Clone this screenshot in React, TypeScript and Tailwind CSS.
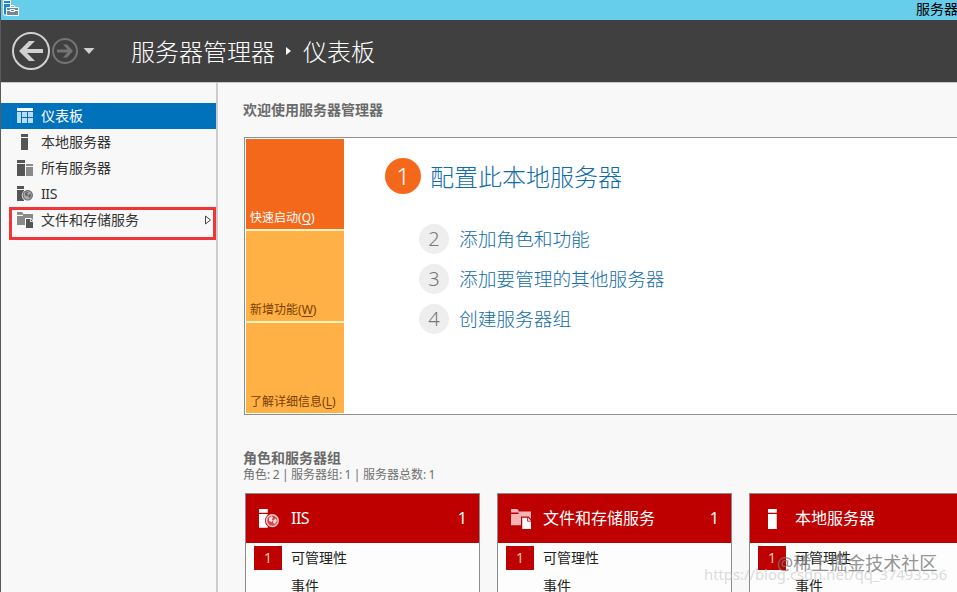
import type { ReactNode } from "react";

type IconName = "dashboard" | "server" | "servers" | "iis" | "files";

// --- NAVIGATION + CARD DATA ---
const navItems: { label: string; icon: IconName }[] = [
  { label: "仪表板", icon: "dashboard" },
  { label: "本地服务器", icon: "server" },
  { label: "所有服务器", icon: "servers" },
  { label: "IIS", icon: "iis" },
  { label: "文件和存储服务", icon: "files" },
];

const steps = [
  { n: 2, label: "添加角色和功能" },
  { n: 3, label: "添加要管理的其他服务器" },
  { n: 4, label: "创建服务器组" },
];

const groups: { label: string; icon: IconName; count: number }[] = [
  { label: "IIS", icon: "iis", count: 1 },
  { label: "文件和存储服务", icon: "files", count: 1 },
  { label: "本地服务器", icon: "server", count: 1 },
];

function Icon({ name, size = 16, light = false }: { name: IconName; size?: number; light?: boolean }) {
  const main = light ? "#ffffff" : "#555555";
  const soft = light ? "#f3b4b4" : "#8a8a8a";
  const bg = light ? "#be0000" : "#f8f8f8";

  const shapes: Record<IconName, ReactNode> = {
    dashboard: (
      <>
        <path d="M0 0h16v3H0z" fill="#fff" />
        <path d="M0 4h4v11H0zM5 4h5v5H5zM11 4h5v5h-5zM5 10h5v5H5zM11 10h5v5h-5z" fill="#b9dcf5" />
      </>
    ),
    server: <path d="M4 0h7v3H4zM4 4h7v12H4z" fill={main} />,
    servers: (
      <>
        <path d="M0 0h8v3H0zM0 4h8v12H0z" fill={main} />
        <path d="M9 4h7v2H9zM9 7h7v9H9z" fill={soft} />
      </>
    ),
    iis: (
      <>
        <path d="M0 0h7v3H0zM0 4h7v11H0z" fill={main} />
        <circle cx="10.7" cy="9.3" r="5.9" fill={bg} />
        <circle cx="10.7" cy="9.3" r="4.7" fill={light ? "#d34b4b" : "#aaaaaa"} stroke={light ? "#f7d0d0" : "#686868"} strokeWidth="1.1" />
        <path d="M8 7.2l2-1.4 1.2.8-.9 1.5.8 1.2-1.4 1-1.7-1zM11.5 9l2-1.4.7 2-1.4 2.3-1.5-1z" fill={light ? "#fbdcdc" : "#666666"} />
      </>
    ),
    files: (
      <>
        <path d="M0 0h5l1 1v1h10v11H0V4h6V3H0z" fill={soft} />
        <path d="M0 3.3h6" stroke={bg} strokeWidth=".7" />
        <path d="M8 6h6l3 3v8H8z" fill={bg} />
        <path d="M9 7h4v3h3v6H9z" fill={main} />
        <path d="M13.7 7L16 9.3h-2.3z" fill={main} />
      </>
    ),
  };

  return (
    <svg width={size} height={size} viewBox="0 0 16 16" className="shrink-0">
      {shapes[name]}
    </svg>
  );
}

function Tile({ label, hotkey, className }: { label: string; hotkey: string; className: string }) {
  return (
    <div className={`flex h-[90px] items-end px-1 pb-[2px] text-xs leading-[18px] whitespace-nowrap ${className}`}>
      {label}(<span className="underline underline-offset-2">{hotkey}</span>)
    </div>
  );
}

function GroupCard({ label, icon, count }: { label: string; icon: IconName; count: number }) {
  return (
    <div className="h-[120px] w-[235px] shrink-0 border border-[#8c8c8c] bg-[#fdfdfd]">
      <div className="flex h-[49px] items-center bg-[#be0000] pr-3 pl-[13px] text-base text-white">
        <Icon name={icon} size={20} light />
        <span className={`ml-3 flex-1 pb-[2px] ${icon === "iis" ? "tracking-[-0.5px]" : ""}`}>{label}</span>
        <span className="pb-[2px]">{count}</span>
      </div>
      <div className="flex h-[30px] items-center pl-2 text-sm text-[#222]">
        <span className="flex h-6 w-7 items-center justify-center bg-[#be0000] text-[#f3d0ae]">1</span>
        <span className="ml-[9px]">可管理性</span>
      </div>
      <div className="flex h-[26px] items-center pl-[45px] text-sm text-[#222]">事件</div>
    </div>
  );
}

export default function App() {
  return (
    <div className="relative flex h-[592px] w-[957px] flex-col overflow-hidden border-l border-[#555b60] bg-[#f8f8f8] [font-family:'Noto_Sans','Noto_Sans_CJK_SC',sans-serif]">
      {/* --- Title bar --- */}
      <div className="flex h-5 shrink-0 justify-between overflow-hidden bg-[#66cdea]">
        <svg width="18" height="18" viewBox="0 0 18 18" className="ml-[1px]">
          <path d="M1.500 .5h7v14.500h-7z" fill="#1687d0" stroke="#fff" />
          <path d="M1 3.500h8" stroke="#fff" />
          <path d="M4.500 7.500h12v8h-12z" fill="#718898" stroke="#fff" />
          <path d="M7.500 7.500l1.500-2h3l1.500 2M5 10.500h3.500m4 0h4M8.500 9.500h4v2h-4z" fill="none" stroke="#fff" />
        </svg>
        <div className="w-[41px] text-sm leading-[17px] whitespace-nowrap text-black">服务器管理器</div>
      </div>

      {/* --- Navigation header --- */}
      <div className="flex h-[62px] shrink-0 items-center bg-[#404040] text-2xl font-light text-white">
        <svg width="90" height="42" viewBox="0 0 90 42" className="ml-[9px] shrink-0" fill="none">
          <circle cx="21" cy="21" r="18" stroke="#d0d0d0" strokeWidth="2" />
          <path d="M9 21l10-10h6l-8 8h16v4H17l8 8h-6z" fill="#d0d0d0" />
          <circle cx="55" cy="21" r="12" stroke="#747474" strokeWidth="2" />
          <path d="M63 21l-6-6.500h-4l4.500 5H47v3h10.500l-4.500 5h4z" fill="#747474" />
          <path d="M73.500 18h11l-5.500 6z" fill="#d0d0d0" />
        </svg>
        <span className="ml-[31px] pt-px">服务器管理器</span>
        <svg width="6" height="8" viewBox="0 0 6 8" className="mx-[11px]">
          <path d="M0 0l5 4-5 4z" fill="#fff" />
        </svg>
        <span className="pt-px">仪表板</span>
      </div>

      <div className="flex min-h-0 flex-1 border-t border-[#c8c8c8]">
        {/* --- Sidebar --- */}
        <nav className="w-[217px] shrink-0 border-r-2 border-[#cccccc] pt-5">
          {navItems.map((item, i) => (
            <div
              key={item.label}
              className={`flex h-[26px] items-center pl-4 text-sm ${i === 0 ? "bg-[#0072bc] text-white" : "text-[#333]"}`}
            >
              <Icon name={item.icon} />
              <span className={`ml-2 flex-1 ${item.icon === "iis" ? "tracking-[-0.4px]" : ""}`}>{item.label}</span>
              {item.icon === "files" && (
                <svg width="8" height="10" viewBox="0 0 8 10" className="mr-1">
                  <path d="M1.500 1l5 4-5 4z" fill="none" stroke="#444" />
                </svg>
              )}
            </div>
          ))}
        </nav>

        {/* --- Dashboard content --- */}
        <main className="w-[739px] shrink-0 overflow-hidden pl-[25px]">
          <h2 className="mt-[17px] text-sm leading-5 font-bold text-[#6a6a6a]">欢迎使用服务器管理器</h2>

          <section className="mt-[17px] ml-px flex h-[278px] w-[740px] border border-[#8f8f8f] bg-white p-px">
            <div className="flex w-[98px] flex-col gap-[2px] bg-[#fff5c0]">
              <Tile label="快速启动" hotkey="Q" className="bg-[#f4681c] text-white" />
              <Tile label="新增功能" hotkey="W" className="bg-[#ffb145] text-[#7a3c00]" />
              <Tile label="了解详细信息" hotkey="L" className="bg-[#ffb145] text-[#7a3c00]" />
            </div>
            <div className="pt-[19px] pl-[41px] text-[#0f6cab]">
              <div className="flex h-9 items-center text-2xl leading-9 font-light">
                <span className="flex size-9 items-center justify-center rounded-full bg-[#f4681c] text-white">1</span>
                <span className="ml-[9px] pt-px">配置此本地服务器</span>
              </div>
              <div className="mt-[30px] ml-[34px] flex flex-col gap-[10px]">
                {steps.map((step) => (
                  <div key={step.n} className="flex items-center text-[18.7px] leading-[30px] font-light">
                    <span className="flex size-[30px] items-center justify-center rounded-full bg-[#eeeeee] text-xl text-[#777]">
                      {step.n}
                    </span>
                    <span className="ml-[10px]">{step.label}</span>
                  </div>
                ))}
              </div>
            </div>
          </section>

          <h2 className="mt-[33px] text-sm leading-5 font-bold text-[#6a6a6a]">角色和服务器组</h2>
          <p className="text-xs leading-[14px] [word-spacing:-0.7px] text-[#6f6f6f]">角色: 2 | 服务器组: 1 | 服务器总数: 1</p>

          <div className="mt-[11px] ml-[2px] flex gap-[17px]">
            {groups.map((group) => (
              <GroupCard key={group.label} {...group} />
            ))}
          </div>
        </main>
      </div>

      {/* Red highlight around the storage entry */}
      <div className="absolute top-[207px] left-2 h-[33px] w-[207px] border-3 border-[#f03438]" />

      {/* Watermarks */}
      <div className="absolute top-[562px] left-[703px] text-[14.8px] leading-6 whitespace-nowrap text-[#c4c4c4]/60">
        https://blog.csdn.net/qq_37493556
      </div>
      <div className="absolute top-[551px] left-[776px] text-lg leading-6 whitespace-nowrap text-[#777777]/80">
        @稀土掘金技术社区
      </div>
    </div>
  );
}
